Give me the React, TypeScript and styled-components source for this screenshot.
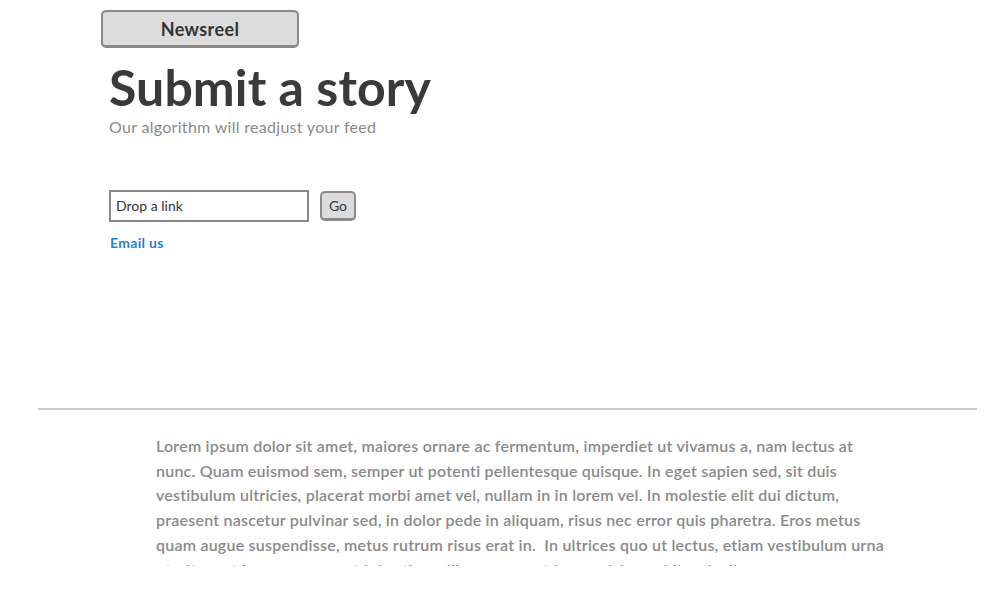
import React from "react";
import styled, { createGlobalStyle } from "styled-components";

const Global = createGlobalStyle`
  html, body { margin: 0; padding: 0; background: #fff; }
  body { font-family: "Lato", "Noto Sans", sans-serif; }
`;

const Page = styled.div`
  width: 998px;
  height: 600px;
  overflow: hidden;
  display: flex;
  flex-direction: column;
`;

const Header = styled.header`
  padding: 10px 0 0 101px;
  display: flex;
  flex-direction: column;
  align-items: flex-start;
  height: 398px;
  box-sizing: border-box;
`;

const NavButton = styled.button`
  width: 198px;
  height: 38px;
  box-sizing: border-box;
  background: #dcdcdc;
  border: 2px solid #8a8a8a;
  border-bottom-width: 3px;
  border-radius: 5px;
  font-family: "Lato", sans-serif;
  font-weight: 700;
  font-size: 18px;
  letter-spacing: 0.4px;
  color: #333;
  padding: 0;
  cursor: pointer;
`;

const Title = styled.h1`
  margin: 11px 0 0 8px;
  font-size: 50px;
  line-height: 56px;
  font-weight: 700;
  color: #3a3a3a;
  letter-spacing: 0.1px;
`;

const Subtitle = styled.p`
  margin: 2px 0 0 8px;
  font-size: 16px;
  line-height: 20px;
  letter-spacing: 0.3px;
  color: #8a8a8a;
`;

const Form = styled.form`
  display: flex;
  align-items: center;
  gap: 12px;
  margin: 53px 0 0 8px;
`;

const LinkInput = styled.input`
  width: 200px;
  height: 32px;
  box-sizing: border-box;
  border: 2px solid #888;
  padding: 0 5px 2px;
  font-family: "Lato", sans-serif;
  font-size: 14px;
  color: #333;
  outline: none;
  &::placeholder { color: #333; }
`;

const GoButton = styled.button`
  width: 36px;
  height: 30px;
  box-sizing: border-box;
  background: #dcdcdc;
  border: 2px solid #8a8a8a;
  border-bottom-width: 3px;
  border-radius: 5px;
  font-family: "Lato", sans-serif;
  font-size: 14px;
  color: #333;
  padding: 0 0 1px;
  margin-left: -1px;
`;

const EmailLink = styled.a`
  margin: 12px 0 0 9px;
  font-size: 14px;
  font-weight: 700;
  letter-spacing: 0.3px;
  color: #1f82d4;
  text-decoration: none;
`;

const Rule = styled.hr`
  margin: 10px 21px 0 38px;
  border: none;
  height: 2px;
  background: #cccccc;
`;

const Article = styled.div`
  padding: 0 0 0 156px;
  margin-top: 24px;
  height: 132px;
  overflow: hidden;
`;

const Para = styled.p`
  margin: 0;
  font-size: 16px;
  line-height: 24.7px;
  letter-spacing: 0.22px;
  color: #8a8a8a;
  font-weight: 600;
`;

const Line = styled.span`
  display: block;
  white-space: pre;
`;

const lines = [
  "Lorem ipsum dolor sit amet, maiores ornare ac fermentum, imperdiet ut vivamus a, nam lectus at",
  "nunc. Quam euismod sem, semper ut potenti pellentesque quisque. In eget sapien sed, sit duis",
  "vestibulum ultricies, placerat morbi amet vel, nullam in in lorem vel. In molestie elit dui dictum,",
  "praesent nascetur pulvinar sed, in dolor pede in aliquam, risus nec error quis pharetra. Eros metus",
  "quam augue suspendisse, metus rutrum risus erat in.  In ultrices quo ut lectus, etiam vestibulum urna",
  "ut, sit amet ipsum magna, et lobortis mollis, consequat lorem nisi, curabitur dapibus nunc quam.",
  "Nunc tempor nisi, laoreet vitae lacus sed, faucibus fusce sed.",
];

export default function App() {
  return (
    <>
      <Global />
      <Page>
        <Header>
          <NavButton>Newsreel</NavButton>
          <Title>Submit a story</Title>
          <Subtitle>Our algorithm will readjust your feed</Subtitle>
          <Form onSubmit={(e) => e.preventDefault()}>
            <LinkInput placeholder="Drop a link" />
            <GoButton type="submit">Go</GoButton>
          </Form>
          <EmailLink href="#">Email us</EmailLink>
        </Header>
        <Rule />
        <Article>
          <Para>
            {lines.map((l, i) => (
              <Line key={i}>{l}</Line>
            ))}
          </Para>
        </Article>
      </Page>
    </>
  );
}
